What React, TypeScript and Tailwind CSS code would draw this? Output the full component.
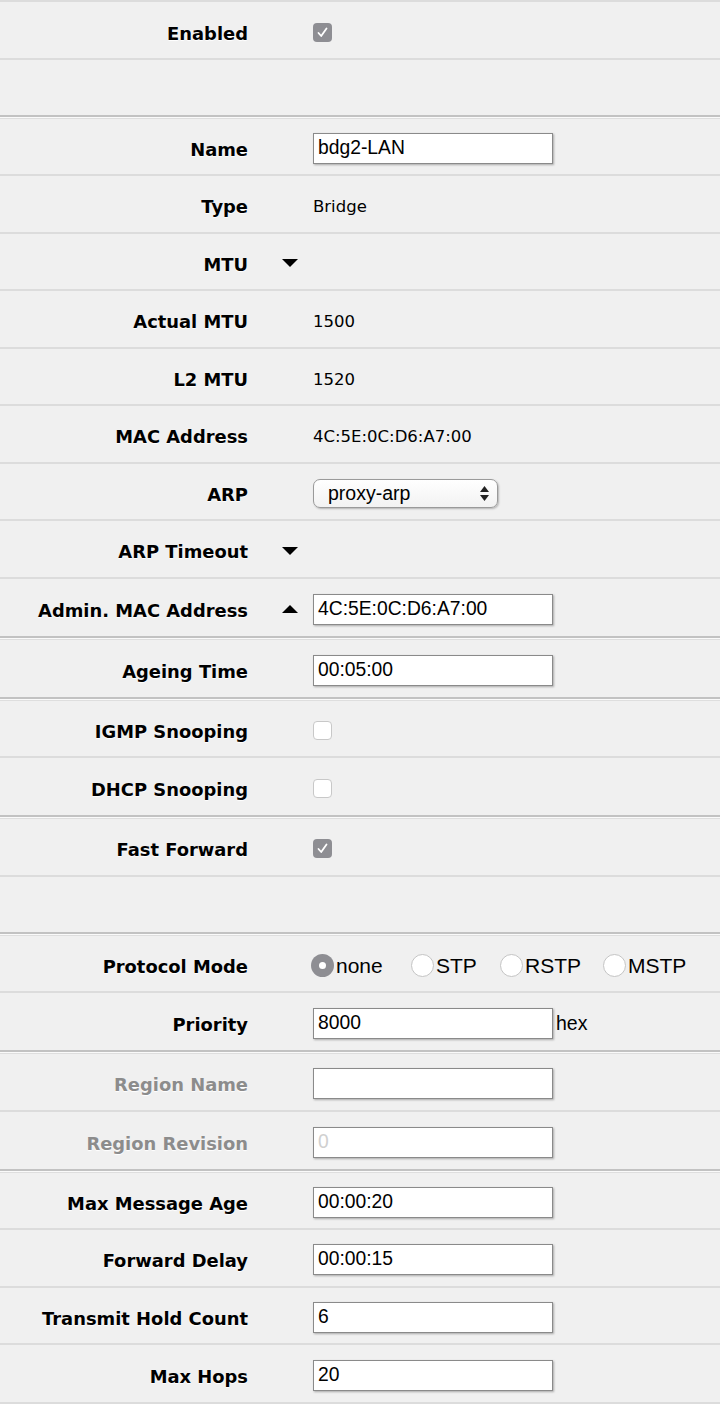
import React from 'react'

type Control =
  | { kind: 'check'; checked: boolean }
  | { kind: 'input'; value: string; placeholder?: string; suffix?: string }
  | { kind: 'text'; value: string }
  | { kind: 'select'; value: string }
  | { kind: 'radios' }
  | { kind: 'none' }

type Row = {
  label: string
  control: Control
  arrow?: 'down' | 'up'
  muted?: boolean
}

const sections: Row[][] = [
  [
    { label: 'Enabled', control: { kind: 'check', checked: true } },
    { label: '', control: { kind: 'none' } },
  ],
  [
    { label: 'Name', control: { kind: 'input', value: 'bdg2-LAN' } },
    { label: 'Type', control: { kind: 'text', value: 'Bridge' } },
    { label: 'MTU', control: { kind: 'none' }, arrow: 'down' },
    { label: 'Actual MTU', control: { kind: 'text', value: '1500' } },
    { label: 'L2 MTU', control: { kind: 'text', value: '1520' } },
    { label: 'MAC Address', control: { kind: 'text', value: '4C:5E:0C:D6:A7:00' } },
    { label: 'ARP', control: { kind: 'select', value: 'proxy-arp' } },
    { label: 'ARP Timeout', control: { kind: 'none' }, arrow: 'down' },
    { label: 'Admin. MAC Address', control: { kind: 'input', value: '4C:5E:0C:D6:A7:00' }, arrow: 'up' },
  ],
  [{ label: 'Ageing Time', control: { kind: 'input', value: '00:05:00' } }],
  [
    { label: 'IGMP Snooping', control: { kind: 'check', checked: false } },
    { label: 'DHCP Snooping', control: { kind: 'check', checked: false } },
  ],
  [
    { label: 'Fast Forward', control: { kind: 'check', checked: true } },
    { label: '', control: { kind: 'none' } },
  ],
  [
    { label: 'Protocol Mode', control: { kind: 'radios' } },
    { label: 'Priority', control: { kind: 'input', value: '8000', suffix: 'hex' } },
  ],
  [
    { label: 'Region Name', control: { kind: 'input', value: '' }, muted: true },
    { label: 'Region Revision', control: { kind: 'input', value: '', placeholder: '0' }, muted: true },
  ],
  [
    { label: 'Max Message Age', control: { kind: 'input', value: '00:00:20' } },
    { label: 'Forward Delay', control: { kind: 'input', value: '00:00:15' } },
    { label: 'Transmit Hold Count', control: { kind: 'input', value: '6' } },
    { label: 'Max Hops', control: { kind: 'input', value: '20' } },
  ],
]

function Checkbox({ checked }: { checked: boolean }) {
  if (checked) {
    return (
      <span className="flex h-[19px] w-[19px] items-center justify-center rounded-[4px] bg-[#8e8e93]">
        <svg width="13" height="13" viewBox="0 0 13 13">
          <path d="M2.5 7 L5.2 10 L10.5 2.5" fill="none" stroke="#fff" strokeWidth="1.8" strokeLinecap="round" strokeLinejoin="round" />
        </svg>
      </span>
    )
  }
  return <span className="block h-[19px] w-[19px] rounded-[4px] border border-[#c8c8c8] bg-white" />
}

function Triangle({ dir }: { dir: 'down' | 'up' }) {
  return (
    <svg width="16" height="8" viewBox="0 0 16 8">
      {dir === 'down' ? <polygon points="0,0 16,0 8,8" fill="#000" /> : <polygon points="0,8 16,8 8,0" fill="#000" />}
    </svg>
  )
}

function TextInput({ value, placeholder }: { value: string; placeholder?: string }) {
  return (
    <div className="flex h-[31px] w-[240px] items-center border border-[#8a8a8a] bg-white pl-[4px] font-['Liberation_Sans',Arial,sans-serif] text-[19.3px] text-black shadow-[1px_1px_2px_rgba(0,0,0,0.3)]">
      {value ? value : <span className="text-[#d0d0d0]">{placeholder}</span>}
    </div>
  )
}

function Radio({ label, selected, width }: { label: string; selected?: boolean; width: string }) {
  return (
    <span className={`flex items-center ${width}`}>
      {selected ? (
        <span className="flex h-[23px] w-[23px] shrink-0 items-center justify-center rounded-full bg-[#8e8e93]">
          <span className="h-[7px] w-[7px] rounded-full bg-white" />
        </span>
      ) : (
        <span className="h-[23px] w-[23px] shrink-0 rounded-full border border-[#c4c4c4] bg-white" />
      )}
      <span className="ml-[2px] font-['Liberation_Sans',Arial,sans-serif] text-[21px] text-black">{label}</span>
    </span>
  )
}

function ControlView({ c }: { c: Control }) {
  switch (c.kind) {
    case 'check':
      return <Checkbox checked={c.checked} />
    case 'input':
      return (
        <div className="flex items-center">
          <TextInput value={c.value} placeholder={c.placeholder} />
          {c.suffix && (
            <span className="ml-[3px] font-['Liberation_Sans',Arial,sans-serif] text-[19.5px] text-black">{c.suffix}</span>
          )}
        </div>
      )
    case 'text':
      return <span className="pt-[4px] text-[16.5px] text-black">{c.value}</span>
    case 'select':
      return (
        <div className="flex h-[29px] w-[185px] items-center justify-between rounded-[7px] border border-[#9a9a9a] bg-gradient-to-b from-white to-[#f2f2f2] pl-[14px] pr-[8px] font-['Liberation_Sans',Arial,sans-serif] text-[19.5px] shadow-[1px_1px_2px_rgba(0,0,0,0.25)]">
          <span>{c.value}</span>
          <svg width="9" height="15" viewBox="0 0 9 15">
            <polygon points="4.5,0 9,6 0,6" fill="#222" />
            <polygon points="0,9 9,9 4.5,15" fill="#222" />
          </svg>
        </div>
      )
    case 'radios':
      return (
        <div className="-ml-[2px] flex items-center">
          <Radio label="none" selected width="w-[100px]" />
          <Radio label="STP" width="w-[89px]" />
          <Radio label="RSTP" width="w-[103px]" />
          <Radio label="MSTP" width="w-[90px]" />
        </div>
      )
    default:
      return null
  }
}

function FormRow({ row, last, first }: { row: Row; last: boolean; first: boolean }) {
  const empty = row.control.kind === 'none' && !row.label
  const height = empty ? 'h-[55px]' : last ? 'h-[57px]' : 'h-[57.5px] border-b-2 border-[#dcdcdc]'
  return (
    <div className={`flex items-center ${height} ${first ? 'pt-[6px]' : empty ? '' : 'pt-[4px]'}`}>
      <div
        className={`w-[248px] pt-[4px] text-right text-[17.9px] font-bold [text-shadow:0_1px_1px_#fff] ${
          row.muted ? 'text-[#8c8c8c]' : 'text-black'
        }`}
      >
        {row.label}
      </div>
      <div className="flex w-[65px] justify-center pl-[19px]">{row.arrow && <Triangle dir={row.arrow} />}</div>
      <ControlView c={row.control} />
    </div>
  )
}

export default function App() {
  return (
    <div className="min-h-[1404px] w-[720px] overflow-hidden bg-[#f0f0f0] font-['DejaVu_Sans',Verdana,sans-serif]">
      <div className="h-[2px] bg-[#dcdcdc]" />
      {sections.map((rows, si) => (
        <div key={si}>
          {rows.map((row, ri) => (
            <FormRow key={ri} row={row} first={si === 0 && ri === 0} last={ri === rows.length - 1} />
          ))}
          {si < sections.length - 1 ? (
            <div>
              <div className="h-[2px] bg-[#c2c2c2]" />
              <div className="h-[1px] bg-[#fafafa]" />
              <div className="h-[1px] bg-[#dedede]" />
            </div>
          ) : (
            <div className="h-[2px] bg-[#dcdcdc]" />
          )}
        </div>
      ))}
    </div>
  )
}
